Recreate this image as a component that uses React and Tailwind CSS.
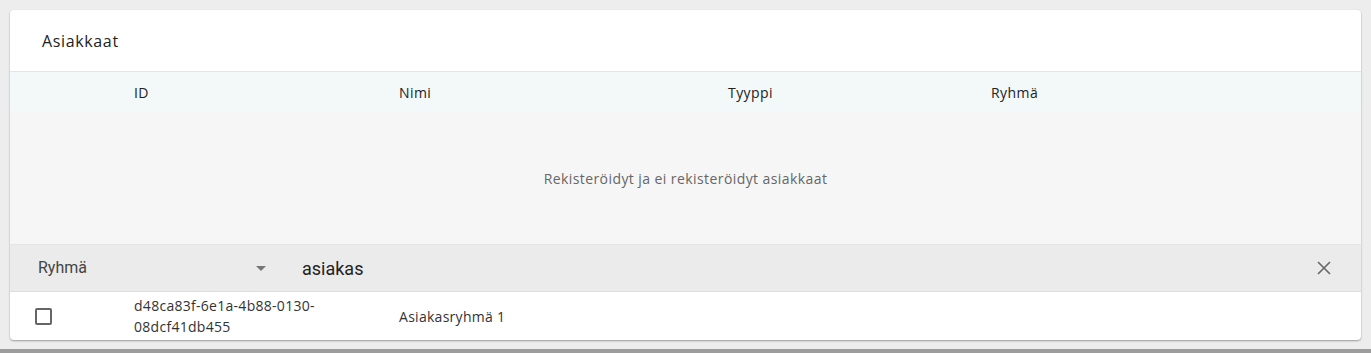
import React from 'react';

const font = { fontFamily: '"Open Sans", "DejaVu Sans", sans-serif' };

export default function App() {
  return (
    <div className="h-[353px] bg-[#ededed] flex flex-col overflow-hidden" style={font}>
      <div className="px-[10px] pt-[10px] flex-1">
        {/* Card */}
        <div className="bg-white rounded-[4px] shadow-[0_1px_2px_rgba(0,0,0,0.35)] overflow-hidden">
          <div className="h-[62px] flex items-center px-8 text-[16px] tracking-[0.04em] text-[#222] border-b border-[#e2e6e6]">
            Asiakkaat
          </div>
          {/* Table header */}
          <div className="h-[40px] bg-[#f3f8f8] flex items-center text-[14px] tracking-[0.03em] text-[#222]">
            <div className="w-[124px]" />
            <div className="w-[265px]">ID</div>
            <div className="w-[329px]">Nimi</div>
            <div className="w-[263px]">Tyyppi</div>
            <div>Ryhmä</div>
          </div>
          {/* Empty state */}
          <div className="h-[133px] bg-[#f6f6f6] flex items-center justify-center text-[14px] tracking-[0.03em] text-[#666] border-b border-[#e4e4e4]">
            Rekisteröidyt ja ei rekisteröidyt asiakkaat
          </div>
          {/* Filter bar */}
          <div className="h-[47px] bg-[#ebebeb] flex items-center border-b border-[#dedede]" style={{ fontFamily: 'Roboto, sans-serif' }}>
            <div className="w-[280px] pl-7 pr-[24px] flex items-center justify-between text-[16px] text-[#444]">
              <span>Ryhmä</span>
              <svg width="10" height="5" viewBox="0 0 10 5"><path d="M0 0l5 5 5-5z" fill="#777" /></svg>
            </div>
            <div className="flex-1 pl-[12px] text-[18px] text-[#222]">asiakas</div>
            <button className="w-[40px] mr-[17px] flex items-center justify-center">
              <svg width="14" height="14" viewBox="0 0 14 14"><path d="M1 1l12 12M13 1L1 13" stroke="#666" strokeWidth="1.6" /></svg>
            </button>
          </div>
          {/* Row */}
          <div className="h-[48px] flex items-center text-[14px] tracking-[0.02em] text-[#333]">
            <div className="w-[124px] pl-[25px]">
              <div className="w-[17px] h-[17px] border-2 border-[#666] rounded-[2px]" />
            </div>
            <div className="w-[265px] leading-[21px]">d48ca83f-6e1a-4b88-0130-<br />08dcf41db455</div>
            <div>Asiakasryhmä 1</div>
          </div>
        </div>
      </div>
      <div className="h-[4px] bg-[#9c9c9c]" />
    </div>
  );
}
